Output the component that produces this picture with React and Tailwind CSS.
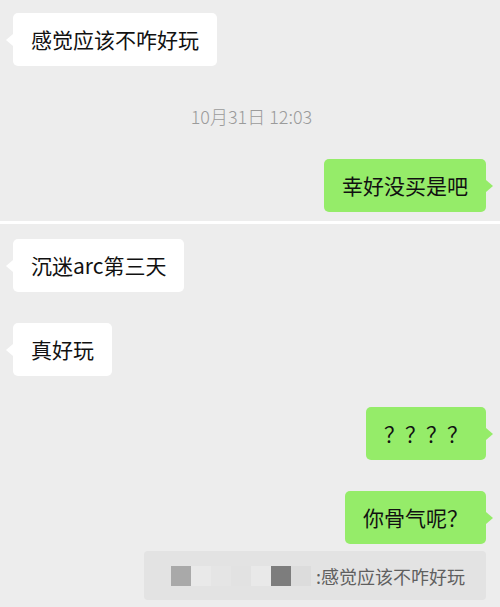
const font = { fontFamily: '"Noto Sans CJK SC", "Noto Sans", sans-serif' };

function Bubble({ text, mine = false, className = '' }) {
  return (
    <div className={`relative rounded-[5px] px-[18px] py-[13px] text-[21px] leading-[27px] text-[#111] whitespace-nowrap ${mine ? 'bg-[#95ec69]' : 'bg-white'} ${className}`}>
      {text}
      {mine ? (
        <span className="absolute right-[-7px] top-1/2 -translate-y-1/2 border-y-[6px] border-y-transparent border-l-[7px] border-l-[#95ec69]" />
      ) : (
        <span className="absolute left-[-7px] top-1/2 -translate-y-1/2 border-y-[6px] border-y-transparent border-r-[7px] border-r-white" />
      )}
    </div>
  );
}

const blurBlocks = ['#a9a9a9', '#e9e9e9', '#e5e5e5', '#e2e2e2', '#e9e9e9', '#7d7d7d', '#dcdcdc'];

export default function App() {
  return (
    <div className="w-[500px] h-[607px] bg-[#ededed] overflow-hidden" style={font}>
      <div className="flex flex-col pt-[13px] pb-[9px] pl-[13px] pr-[14px]">
        <div className="flex">
          <Bubble text="感觉应该不咋好玩" />
        </div>
        <div className="mt-[37px] text-center text-[18px] leading-[26px] text-[#9b9b9b] pl-[4px] font-light">10月31日 12:03</div>
        <div className="mt-[30px] flex justify-end">
          <Bubble text="幸好没买是吧" mine />
        </div>
      </div>
      <div className="h-[3px] bg-white" />
      <div className="flex flex-col pt-[15px] pl-[13px] pr-[14px]">
        <div className="flex">
          <Bubble text="沉迷arc第三天" />
        </div>
        <div className="mt-[31px] flex">
          <Bubble text="真好玩" />
        </div>
        <div className="mt-[31px] flex justify-end">
          <Bubble text="？？？？" mine />
        </div>
        <div className="mt-[31px] flex justify-end">
          <Bubble text="你骨气呢？" mine />
        </div>
        <div className="mt-[7px] flex justify-end">
          <div className="w-[342px] h-[49px] rounded-[4px] bg-[#e3e3e3] flex items-center pl-[27px] pr-[18px]">
            <div className="flex">
              {blurBlocks.map((c, i) => (
                <span key={i} className="w-[20px] h-[20px]" style={{ backgroundColor: c }} />
              ))}
            </div>
            <span className="ml-[5px] text-[18px] leading-[24px] text-[#5f5f5f] whitespace-nowrap">:感觉应该不咋好玩</span>
          </div>
        </div>
      </div>
    </div>
  );
}
